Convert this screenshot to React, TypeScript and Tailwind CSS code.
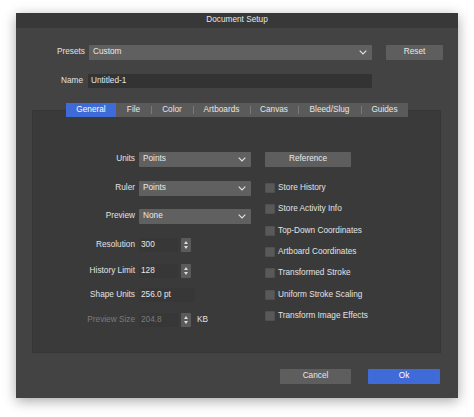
import React from 'react';

const font = { fontFamily: '"Liberation Sans", Arial, sans-serif' };

function Chevron() {
  return (
    <svg width="8" height="5" viewBox="0 0 8 5" className="shrink-0">
      <polyline points="0.7,0.7 4,4 7.3,0.7" fill="none" stroke="#e4e4e4" strokeWidth="1.1" />
    </svg>
  );
}

function Select({ value, width }: { value: string; width: string }) {
  return (
    <div className={`${width} h-[15px] bg-[#606060] rounded-[1px] flex items-center justify-between pl-[4px] pr-[5px] text-[#e8e8e8]`}>
      <span>{value}</span>
      <Chevron />
    </div>
  );
}

function Stepper() {
  return (
    <div className="w-[10px] h-[14px] bg-[#5b5b5b] rounded-[1px] flex flex-col items-center justify-center gap-[2px] ml-[3px]">
      <svg width="4" height="3" viewBox="0 0 4 3">
        <polygon points="2,0 4,3 0,3" fill="#dcdcdc" />
      </svg>
      <svg width="4" height="3" viewBox="0 0 4 3">
        <polygon points="0,0 4,0 2,3" fill="#dcdcdc" />
      </svg>
    </div>
  );
}

function Label({ children, dim }: { children: React.ReactNode; dim?: boolean }) {
  return (
    <div className={`w-[106px] text-right pr-[4px] ${dim ? 'text-[#7a7a7a]' : 'text-[#e2e2e2]'}`}>{children}</div>
  );
}

function NumberRow({ label, value, dim, unit, mt }: { label: string; value: string; dim?: boolean; unit?: string; mt: string }) {
  return (
    <div className={`flex items-center h-[14px] ${mt}`}>
      <Label dim={dim}>{label}</Label>
      <div className={`w-[39px] h-[14px] bg-[#373737] flex items-center pl-[2px] ${dim ? 'text-[#7a7a7a]' : 'text-[#e8e8e8]'}`}>{value}</div>
      <Stepper />
      {unit && <span className="ml-[6px] text-[#e2e2e2]">{unit}</span>}
    </div>
  );
}

function Check({ label }: { label: string }) {
  return (
    <div className="flex items-center h-[12px]">
      <div className="w-[10px] h-[10px] bg-[#595959] border border-[#505050] rounded-[1px]" />
      <span className="ml-[3px] text-[#e2e2e2]">{label}</span>
    </div>
  );
}

const tabs = ['General', 'File', 'Color', 'Artboards', 'Canvas', 'Bleed/Slug', 'Guides'];
const tabWidths = ['w-[50px]', 'w-[35px]', 'w-[42px]', 'w-[57px]', 'w-[48px]', 'w-[63px]', 'w-[47px]'];

export default function App() {
  return (
    <div className="w-[474px] h-[417px] bg-white pt-[13px] pl-[16px] text-[8.25px] leading-none" style={font}>
      <div className="w-[442px] h-[385px] bg-[#434343] flex flex-col shadow-[0_3px_12px_rgba(0,0,0,0.35)]">
        {/* Title bar */}
        <div className="h-[15px] bg-[#383838] flex items-center justify-center text-[#e6e6e6]">Document Setup</div>

        {/* Presets */}
        <div className="flex items-center h-[15px] mt-[17px]">
          <div className="w-[69px] text-right text-[#e2e2e2]">Presets</div>
          <div className="ml-[4px]">
            <Select value="Custom" width="w-[283px]" />
          </div>
          <div className="ml-[14px] w-[57px] h-[15px] bg-[#5e5e5e] rounded-[1px] flex items-center justify-center text-[#e8e8e8]">Reset</div>
        </div>

        {/* Name */}
        <div className="flex items-center h-[14px] mt-[14px]">
          <div className="w-[67px] text-right text-[#e2e2e2]">Name</div>
          <div className="ml-[5px] w-[284px] h-[14px] bg-[#333333] flex items-center pl-[3px] text-[#e8e8e8]">Untitled-1</div>
        </div>

        {/* Tabs */}
        <div className="relative z-10 flex mt-[15px] ml-[50px] h-[14px]">
          {tabs.map((t, i) => (
            <div
              key={t}
              className={`${tabWidths[i]} h-[14px] flex items-center justify-center relative ${
                i === 0 ? 'bg-[#3e6bd7] text-white' : 'bg-[#5a5a5a] text-[#e6e6e6]'
              }`}
            >
              {i > 1 && <div className="absolute left-0 top-[3px] w-px h-[8px] bg-[#7a7a7a]" />}
              {t}
            </div>
          ))}
        </div>

        {/* Panel */}
        <div className="-mt-[7px] ml-[16px] w-[409px] h-[243px] bg-[#3a3a3a] border border-[#363636] pt-[41px] flex">
          <div className="w-[218px] flex flex-col">
            <div className="flex items-center h-[15px]">
              <Label>Units</Label>
              <Select value="Points" width="w-[112px]" />
            </div>
            <div className="flex items-center h-[15px] mt-[14px]">
              <Label>Ruler</Label>
              <Select value="Points" width="w-[112px]" />
            </div>
            <div className="flex items-center h-[15px] mt-[13px]">
              <Label>Preview</Label>
              <Select value="None" width="w-[112px]" />
            </div>
            <NumberRow label="Resolution" value="300" mt="mt-[14px]" />
            <NumberRow label="History Limit" value="128" mt="mt-[12px]" />
            <div className="flex items-center h-[14px] mt-[10px]">
              <Label>Shape Units</Label>
              <div className="w-[56px] h-[14px] bg-[#373737] flex items-center pl-[2px] text-[#e8e8e8]">256.0 pt</div>
            </div>
            <NumberRow label="Preview Size" value="204.8" dim unit="KB" mt="mt-[11px]" />
          </div>

          <div className="ml-[14px] flex flex-col">
            <div className="w-[86px] h-[15px] bg-[#5e5e5e] rounded-[1px] flex items-center justify-center text-[#e8e8e8]">Reference</div>
            <div className="mt-[15px] flex flex-col gap-[9.33px]">
              <Check label="Store History" />
              <Check label="Store Activity Info" />
              <Check label="Top-Down Coordinates" />
              <Check label="Artboard Coordinates" />
              <Check label="Transformed Stroke" />
              <Check label="Uniform Stroke Scaling" />
              <Check label="Transform Image Effects" />
            </div>
          </div>
        </div>

        {/* Footer */}
        <div className="flex mt-[16px] ml-[264px]">
          <div className="w-[71px] h-[15px] bg-[#5e5e5e] rounded-[1px] flex items-center justify-center text-[#e8e8e8]">Cancel</div>
          <div className="ml-[17px] w-[72px] h-[15px] bg-[#3e6bd7] rounded-[1px] flex items-center justify-center text-white">Ok</div>
        </div>
      </div>
    </div>
  );
}
